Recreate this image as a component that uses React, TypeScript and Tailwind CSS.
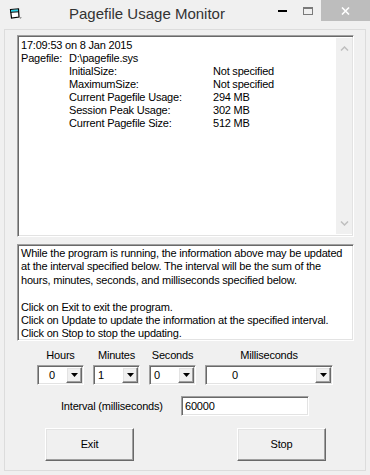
import { ReactNode } from "react";

const FONT = "font-['Liberation_Sans',Arial,sans-serif]";
const SUNKEN =
  "border border-t-[#a0a0a0] border-l-[#a0a0a0] border-r-white border-b-white shadow-[inset_1px_1px_0_#696969,inset_-1px_-1px_0_#e3e3e3]";
const RAISED =
  "border border-t-white border-l-white border-r-[#696969] border-b-[#696969] shadow-[inset_-1px_-1px_0_#a0a0a0,inset_1px_1px_0_#e3e3e3] bg-[#f0f0f0]";

const ROWS: [string, string][] = [
  ["InitialSize:", "Not specified"],
  ["MaximumSize:", "Not specified"],
  ["Current Pagefile Usage:", "294 MB"],
  ["Session Peak Usage:", "302 MB"],
  ["Current Pagefile Size:", "512 MB"],
];

const HELP = [
  "While the program is running, the information above may be updated",
  "at the interval specified below. The interval will be the sum of the",
  "hours, minutes, seconds, and milliseconds specified below.",
  "",
  "Click on Exit to exit the program.",
  "Click on Update to update the information at the specified interval.",
  "Click on Stop to stop the updating.",
];

function AppIcon() {
  return (
    <svg width="14" height="12" viewBox="0 0 14 12">
      <path d="M1.5 1.5 L9.5 1 L10 9 L2.5 10 Z" fill="#fff" stroke="#000" strokeWidth="1.2" />
      <path d="M2 2 L9 1.6 L9.2 3.6 L2.2 4 Z" fill="#2ad4e8" />
      <path d="M1.5 4.3 L9.6 3.8" stroke="#000" strokeWidth="1" />
      <path d="M10.5 9 L13 9.5 L11 11 Z" fill="#888" />
    </svg>
  );
}

function Combo({ w, value, pad }: { w: string; value: string; pad: string }) {
  return (
    <div className={`${w} h-[20px] bg-white flex ${SUNKEN} p-[1px]`}>
      <div className="flex-1 flex items-center justify-start text-[11px] text-black">
        <span className={pad}>{value}</span>
      </div>
      <div className={`w-[16px] h-full flex items-center justify-center ${RAISED}`}>
        <svg width="7" height="4" viewBox="0 0 7 4">
          <path d="M0 0 H7 L3.5 4 Z" fill="#000" />
        </svg>
      </div>
    </div>
  );
}

function Field({ label, children }: { label: string; children: ReactNode }) {
  return (
    <div className="flex flex-col items-center">
      <div className="h-[13px] leading-[13px] text-[11px] mb-[3px] mt-[1px]">{label}</div>
      {children}
    </div>
  );
}

function Button({ label }: { label: string }) {
  return (
    <button className={`w-[89px] h-[33px] text-[11px] text-black ${RAISED}`}>{label}</button>
  );
}

export default function App() {
  return (
    <div className={`w-[370px] h-[475px] bg-[#f0f0f0] flex flex-col text-black tracking-[-0.2px] ${FONT}`}>
      {/* title bar */}
      <div className="h-[29px] flex items-start">
        <div className="pl-[9px] pt-[8px]">
          <AppIcon />
        </div>
        <div className="ml-[46px] mt-[4px] text-[15px] leading-[20px] text-[#333] tracking-normal">
          Pagefile Usage Monitor
        </div>
        <div className="ml-auto flex h-[21px]">
          <div className="w-[26px] flex items-center justify-center">
            <div className="w-[9px] h-[2px] bg-black" />
          </div>
          <div className="w-[26px] flex items-center justify-center">
            <div className="w-[10px] h-[8px] border border-[#7a7a7a] border-t-2" />
          </div>
          <div className="w-[49px] bg-[#bdbdbd] flex items-center justify-center">
            <svg width="9" height="8" viewBox="0 0 9 8">
              <path d="M1 0.5 L8 7.5 M8 0.5 L1 7.5" stroke="#fff" strokeWidth="1.6" />
            </svg>
          </div>
        </div>
      </div>

      {/* client area */}
      <div className="mx-[4px] mb-[4px] flex-1 border border-[#dcdcdc] bg-[#f0f0f0] flex flex-col">
        <div className={`ml-[12px] mt-[5px] w-[337px] h-[202px] bg-white flex ${SUNKEN} p-[2px] pr-[1px]`}>
          <div className="flex-1 pl-[1px] pt-[1px] text-[11px] leading-[13px]">
            <div>17:09:53 on 8 Jan 2015</div>
            <div className="grid grid-cols-[48px_144px_auto]">
              <div>Pagefile:</div>
              <div>D:\pagefile.sys</div>
              <div />
              {ROWS.map(([k, v]) => (
                <>
                  <div key={k + "a"} />
                  <div key={k}>{k}</div>
                  <div key={k + "v"}>{v}</div>
                </>
              ))}
            </div>
          </div>
          <div className="w-[16px] bg-[#f0f0f0] flex flex-col items-center justify-between py-[8px]">
            <svg width="9" height="5" viewBox="0 0 9 5">
              <path d="M1 4.5 L4.5 1 L8 4.5" fill="none" stroke="#bfbfbf" strokeWidth="1.5" />
            </svg>
            <svg width="9" height="5" viewBox="0 0 9 5">
              <path d="M1 0.5 L4.5 4 L8 0.5" fill="none" stroke="#bfbfbf" strokeWidth="1.5" />
            </svg>
          </div>
        </div>

        <div className={`ml-[12px] mt-[7px] w-[337px] h-[97px] bg-white ${SUNKEN} px-[2px] pt-[2px] text-[11px] leading-[13.4px]`}>
          {HELP.map((l, i) => (
            <div key={i} className="pl-[1px] h-[13.4px] whitespace-nowrap">
              {l}
            </div>
          ))}
        </div>

        <div className="ml-[32px] mt-[7px] flex gap-[9px]">
          <Field label="Hours">
            <Combo w="w-[47px]" value="0" pad="pl-[10px]" />
          </Field>
          <Field label="Minutes">
            <Combo w="w-[47px]" value="1" pad="pl-[3px]" />
          </Field>
          <Field label="Seconds">
            <Combo w="w-[47px]" value="0" pad="pl-[3px]" />
          </Field>
          <Field label="Milliseconds">
            <Combo w="w-[128px]" value="0" pad="pl-[25px]" />
          </Field>
        </div>

        <div className="mt-[11px] flex items-center">
          <div className="ml-[56px] w-[120px] text-[11px] leading-[13px]">Interval (milliseconds)</div>
          <div className={`w-[128px] h-[20px] bg-white ${SUNKEN} flex items-center pl-[3px] text-[11px]`}>
            60000
          </div>
        </div>

        <div className="mt-[12px] flex">
          <div className="ml-[40px]">
            <Button label="Exit" />
          </div>
          <div className="ml-[103px]">
            <Button label="Stop" />
          </div>
        </div>
      </div>
    </div>
  );
}
